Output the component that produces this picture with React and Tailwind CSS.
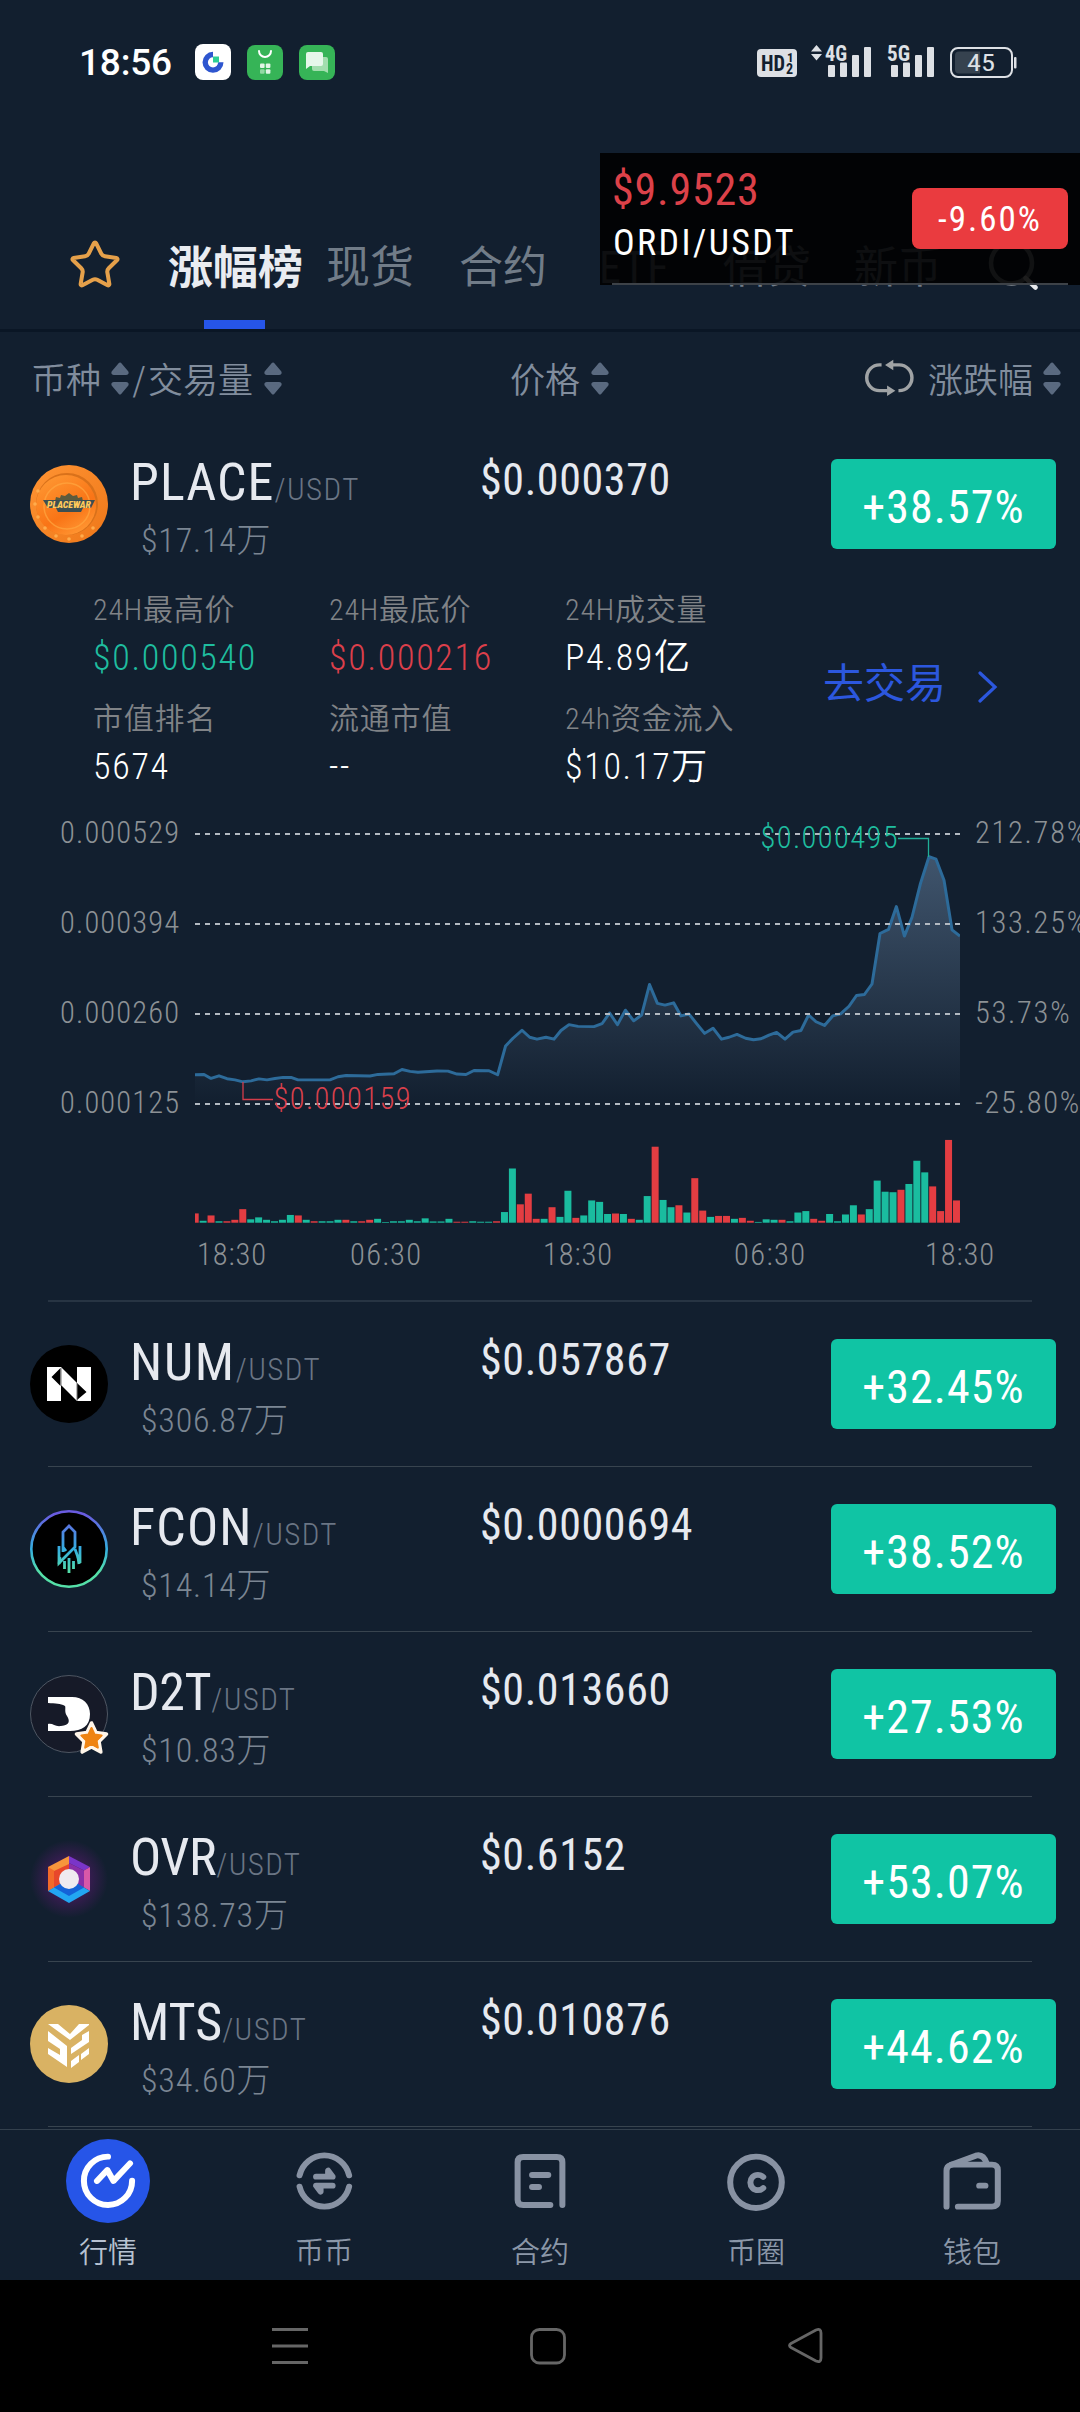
import { Star } from "lucide-react";

const TABS = [
  { label: "涨幅榜", className: "w-[158px] font-bold text-[45px] text-[#e9ecf1]", active: true },
  { label: "现货", className: "w-[133px] text-[44px] text-[#717c88]" },
  { label: "合约", className: "w-[140px] text-[44px] text-[#717c88]" },
  { label: "ETF", className: "w-[124px] text-[44px] tracking-[1.5px] text-[#717c88]" },
  { label: "借贷", className: "w-[131px] text-[44px] text-[#717c88]" },
  { label: "新币", className: "w-[100px] text-[44px] text-[#717c88]" },
];

const STATS = [
  { label: "24H最高价", value: "$0.000540", color: "text-[#1fbd9f]" },
  { label: "24H最底价", value: "$0.000216", color: "text-[#dc3f4b]" },
  { label: "24H成交量", value: "P4.89亿", color: "text-white" },
  { label: "市值排名", value: "5674", color: "text-white" },
  { label: "流通市值", value: "--", color: "text-white" },
  { label: "24h资金流入", value: "$10.17万", color: "text-white" },
];

const PRICE_LINE =
  "195,1083.8 204,1083.4 211,1087.5 219,1084.8 227,1087.8 235,1089 243,1091 251,1090 259,1088 267,1089 275,1087.6 283,1086.5 291,1086.5 298,1089 330,1089 338,1085.8 346,1084.5 370,1085 378,1083.4 394,1082.7 402,1078.3 410,1080.3 418,1081.2 437,1079.8 448,1080 457,1083 466,1083.4 474,1079.3 489,1079.6 497.6,1083.8 505.6,1054 513,1046 522,1037.8 529.7,1045 537,1047 546,1045 554,1047 561,1038 569,1032 578,1033.8 594,1034 602,1031 609.6,1020 617.5,1032 625.4,1017 633.7,1028 641.6,1022 649.5,990.5 657.4,1010 665,1011.8 673.6,1009.4 681,1023 689,1021 697,1031.4 704.6,1041 713,1035.6 721.5,1047 729,1045 737,1042 745.6,1046 753.5,1047.6 761,1046.6 769,1042.8 776.6,1040 785,1047 793,1039.7 801,1038 808.6,1022 816,1029 824.5,1032.8 832.7,1023 840.6,1020.8 849,1013 856.5,1001.8 864.4,1000.8 872,990 880,937.8 888.5,933.6 896.4,910 904.4,940.5 912,921 920.5,886 929,858.5 936,861 944,882.7 952,934 960,940.5";

// positive = up candle (green), negative = down candle (red)
const VOLUMES = [
  -9.6, 2, -7.5, 1.5, -1.5, -3, -14, 3.5, 5.5, 3, 1.5, 3, 8, -7.5, 3, -1.5, 1.5, 1.5, 3, -3, 1.5, -1.5, -3, 4, 0.7,
  1.5, 1.5, 3, 1.5, 4.5, 1.3, 1.3, 4, -1, -1, 1.5, 1, 1, -1.5, 11, 56, -19, -30, -4, 4, -16, 6, 33, -5, 7.5, 23,
  21.5, 9, -9.5, 9, -4, 3, 27.5, -78.5, 23.5, 16, -18, 10.5, -46, -12.5, 6, -7, -7, 4, -5, -2, 0.8, 3.5, 3, -3, 1.5,
  10.5, 12, -4, -2, 9, 1.5, 8.5, 18, -8.5, 14, 43.5, 32, 31.5, -34, 40, 64, 52, -37.5, -12, -85.5, -23,
];
const VOLUME_SCALE = 0.968;

const GRID = [
  { y: 834, left: "0.000529", right: "212.78%" },
  { y: 924, left: "0.000394", right: "133.25%" },
  { y: 1014, left: "0.000260", right: "53.73%" },
  { y: 1104, left: "0.000125", right: "-25.80%" },
];

const TIMES = [
  { x: 197, w: 69, label: "18:30" },
  { x: 350, w: 71, label: "06:30" },
  { x: 543, w: 69, label: "18:30" },
  { x: 734, w: 71, label: "06:30" },
  { x: 925, w: 69, label: "18:30" },
];

function StatusBar() {
  return (
    <div className="flex h-[158px] shrink-0 items-start pt-[44px] pl-[79px] pr-[62px]">
      <span className="w-[116px] font-['Roboto',sans-serif] text-[37px] font-medium leading-[38px] tracking-[-0.2px] text-white">18:56</span>
      <div className="flex gap-4">
        <svg width="36" height="36" viewBox="0 0 36 36">
          <rect width="36" height="36" rx="8" fill="#fff" />
          <path d="M18 10.500a7.800 7.800 0 1 0 7.800 7.800" fill="none" stroke="#2e56cf" strokeWidth="5.400" />
          <path d="M18 12.500h6v6h-6z" fill="#2ecf96" />
        </svg>
        <svg width="36" height="36" viewBox="0 0 36 36">
          <rect y="1" width="36" height="35" rx="8" fill="#36b457" />
          <path d="M12 7a6 6 0 0 0 12 0" fill="none" stroke="#fff" strokeWidth="2" strokeLinecap="round" />
          <rect x="13" y="19.500" width="4.600" height="4.600" rx="1" fill="#e2f5e6" />
          <rect x="18.800" y="19.500" width="4.600" height="4.600" rx="1" fill="#e2f5e6" />
          <rect x="13" y="25.200" width="4.600" height="4.600" rx="1" fill="#93d9a4" />
          <rect x="18.800" y="25.200" width="4.600" height="4.600" rx="1" fill="#e2f5e6" />
        </svg>
        <svg width="36" height="36" viewBox="0 0 36 36">
          <rect y="1" width="36" height="35" rx="8" fill="#36b457" />
          <path d="M15 13h12q2 0 2 2v14l-4-2H15q-2 0-2-2V15q0-2 2-2z" fill="#a2deae" />
          <path d="M9 8h13q2 0 2 2v10q0 2-2 2H11l-4 3V10q0-2 2-2z" fill="#e6f7ea" />
        </svg>
      </div>
      <svg className="-mt-2 ml-auto" width="262" height="46" viewBox="756 36 262 46" fontFamily="Roboto Condensed" fill="#dde0e5">
        <rect x="757" y="49" width="40" height="28" rx="4" />
        <g fill="#121f2f" fontWeight="700">
          <text x="761" y="71" fontSize="22" textLength="24" lengthAdjust="spacingAndGlyphs">HD</text>
          <text x="787" y="62" fontSize="13">1</text>
          <text x="786" y="74" fontSize="14">2</text>
        </g>
        <path d="M816.500 45l5.500 6.500h-11zM816.500 60.500l5.500-6.500h-11z" />
        <text x="825" y="60.500" fontSize="21.500" fontWeight="700" textLength="22" lengthAdjust="spacingAndGlyphs">4G</text>
        <text x="887" y="60.500" fontSize="21.500" fontWeight="700" textLength="23" lengthAdjust="spacingAndGlyphs">5G</text>
        {[828, 891].map((x) => (
          <g key={x}>
            <rect x={x} y="65" width="7" height="12" rx="1" />
            <rect x={x + 12} y="62.500" width="7" height="14.500" rx="1" />
            <rect x={x + 24} y="55" width="7" height="22" rx="1" />
            <rect x={x + 36} y="47" width="7" height="30" rx="1" />
          </g>
        ))}
        <rect x="951" y="48" width="61" height="29" rx="7" fill="none" stroke="#dde0e5" strokeWidth="2" />
        <path d="M959 51.500h21v22h-21q-4 0-4-4V55.500q0-4 4-4z" fill="#36424f" />
        <rect x="1014" y="57" width="2.500" height="11.500" rx="1" />
        <text x="967" y="71" fontSize="24" textLength="28" lengthAdjust="spacingAndGlyphs">45</text>
      </svg>
    </div>
  );
}

function FloatingTicker() {
  return (
    <div className="absolute top-[153px] right-0 flex h-[132px] w-[480px] bg-black/88 px-3">
      <div className="flex w-full items-center justify-between border-b-2 border-[#3d4248]">
        <div className="flex flex-col self-start pt-[14px]">
          <span className="text-[44px] leading-[46px] tracking-[0.8px] text-[#dc4149]">$9.9523</span>
          <span className="mt-[10px] pl-px text-[36px] leading-[40px] tracking-[2.4px] text-white">ORDI/USDT</span>
        </div>
        <span className="flex h-[61px] w-[156px] items-center justify-center rounded-lg bg-[#ea3b3f] pt-[5px] text-[35px] tracking-[2px] text-white">-9.60%</span>
      </div>
    </div>
  );
}

function Tabs() {
  return (
    <div className="flex h-[174px] shrink-0 items-center border-b-[3px] border-[#0a1625] pl-[68px]">
      <Star className="mt-[42px] mr-[46px] size-[54px] text-[#e5a04a]" strokeWidth={1.8} />
      {TABS.map((tab) => (
        <div key={tab.label} className={`mt-[46px] flex h-[125px] flex-col leading-[129px] ${tab.className}`}>
          <span className="h-[116px] whitespace-nowrap">{tab.label}</span>
          {tab.active && <span className="ml-[36px] h-[9px] w-[61px] shrink-0 bg-[#2655e8]" />}
        </div>
      ))}
      <svg className="mt-[43px] ml-[32px] shrink-0" width="52" height="52" viewBox="985 239 52 52" fill="none" stroke="#8d9399" strokeWidth="4.500">
        <circle cx="1010.500" cy="263" r="20.500" />
        <path d="M1024.500 278l10 9.500" stroke="#e8eaec" strokeLinecap="round" />
      </svg>
    </div>
  );
}

function SortArrows() {
  return (
    <svg className="mb-[8px] shrink-0" width="18" height="33" viewBox="0 0 18 34" preserveAspectRatio="none" fill="#5a6a80" stroke="#5a6a80" strokeWidth="3" strokeLinejoin="round">
      <path d="M9 2l7 8.500q.5 1.500-1 1.500H3q-1.500 0-1-1.500z" />
      <path d="M9 32l7-8.500q.5-1.500-1-1.500H3q-1.500 0-1 1.500z" />
    </svg>
  );
}

function ListHeader() {
  return (
    <div className="flex h-[90px] shrink-0 items-center pt-[10px] pl-[31px] text-[35px] font-[350] text-[#818d9d]">
      <div className="flex w-[479px] items-center">
        <span className="w-[80px]">币种</span>
        <SortArrows />
        <span className="ml-[3px] w-[16px] text-[40px] font-light">/</span>
        <span className="w-[116px]">交易量</span>
        <SortArrows />
      </div>
      <div className="flex w-[355px] items-center">
        <span className="w-[81px]">价格</span>
        <SortArrows />
      </div>
      <svg className="mb-[10px]" width="49" height="37" viewBox="942 1072 142 112" preserveAspectRatio="none" fill="none" stroke="#a0a3a5" strokeWidth="10">
        <path d="M990 1090h-6a37 39 0 0 0 0 78h24" />
        <path d="M1018 1090h23a37 39 0 0 1 0 78h-2" />
        <path d="M1000 1090l24-16v32zM1030 1168l-24-16v32z" fill="#a0a3a5" stroke="none" />
      </svg>
      <span className="ml-[14px] w-[115px] shrink-0">涨跌幅</span>
      <SortArrows />
    </div>
  );
}

function PlaceLogo() {
  return (
    <svg width="78" height="78" viewBox="0 0 78 78" className="shrink-0">
      <defs>
        <linearGradient id="placeRim" x1="0" y1="0" x2="1" y2="1">
          <stop offset="0" stopColor="#ff9433" />
          <stop offset="1" stopColor="#ee7719" />
        </linearGradient>
        <linearGradient id="placeFace" x1="0" y1="0" x2="0.6" y2="1">
          <stop offset="0" stopColor="#ff9c36" />
          <stop offset="0.7" stopColor="#f97416" />
          <stop offset="1" stopColor="#ff922f" />
        </linearGradient>
      </defs>
      <circle cx="39" cy="39" r="39" fill="url(#placeRim)" />
      <circle cx="37" cy="39" r="31" fill="#d9711a" />
      <circle cx="36" cy="40" r="30" fill="url(#placeFace)" />
      <circle cx="37" cy="41" r="23" fill="none" stroke="#ffa640" strokeWidth="1.500" opacity="0.700" />
      <g fill="#ffac4c">
        <circle cx="5" cy="39" r="1.800" />
        <circle cx="8" cy="26" r="1.800" />
        <circle cx="8" cy="52" r="1.800" />
        <circle cx="15" cy="63" r="1.800" />
        <circle cx="26" cy="71" r="1.800" />
        <circle cx="39" cy="74" r="1.800" />
        <circle cx="52" cy="71" r="1.800" />
        <circle cx="63" cy="63" r="1.800" />
      </g>
      <path d="M25 36l1-4 4 1 1-3 4 1 4-3 4 3 4-1 1 3 4-1 1 4z" fill="#5d5b3c" />
      <path d="M13 35h52l-4 8h-8l-2 4H28l-2-4h-8z" fill="#3c4f52" />
      <text x="17" y="42.500" fontSize="9" fontWeight="900" fontStyle="italic" fill="#ffc95a" textLength="44" lengthAdjust="spacingAndGlyphs">PLACEWAR</text>
    </svg>
  );
}

function NumLogo() {
  return (
    <svg width="78" height="78" viewBox="0 0 78 78" className="shrink-0">
      <circle cx="39" cy="39" r="39" fill="#000" />
      <path d="M17 22h14l16 16V22h14v34H47L31 40v16H17z" fill="#fff" />
      <path d="M21.500 32l9-9v18zM47 38l9.500 9-9.500 8z" fill="#000" />
      <path d="M31 23v17M47 38v18" stroke="#777" strokeWidth="1" />
    </svg>
  );
}

function FconLogo() {
  return (
    <svg width="78" height="78" viewBox="0 0 78 78" className="shrink-0">
      <defs>
        <linearGradient id="fcon" x1="0" y1="0" x2="0" y2="78" gradientUnits="userSpaceOnUse">
          <stop offset="0.05" stopColor="#6a5be0" />
          <stop offset="0.5" stopColor="#35aee0" />
          <stop offset="0.8" stopColor="#55e0a8" />
        </linearGradient>
      </defs>
      <circle cx="39" cy="39" r="37.700" fill="#000" stroke="url(#fcon)" strokeWidth="2.600" />
      <g fill="none" stroke="url(#fcon)" strokeWidth="2.800">
        <path d="M36 41l-3-4V22l6-6 6 6v15L29 53V36M33 37v5M45 39l5 14V36" />
        <path d="M39 48v15M34.500 51v8M43.500 51v8M30 47l-1 7M48 47l1 7" />
      </g>
    </svg>
  );
}

function D2tLogo() {
  return (
    <svg width="82" height="80" viewBox="0 0 82 80" className="-mr-1 shrink-0">
      <circle cx="39" cy="39" r="38.500" fill="#161a28" stroke="#5d6470" strokeWidth="0.800" />
      <path d="M18 22h24c11 0 18 7 18 17 0 12-8 17-20 17H18v-7c5-1 7 3 13 2 9-1 9-5 6-10-3-4-1-8-2-10-5-3-9-2-17-3z" fill="#fff" />
      <path
        d="M61.500 48l4.500 9.500 10.500 1.500-7.500 7.500 1.800 10.500-9.300-5-9.300 5L54 66.500 46.500 59 57 57.500z"
        fill="#ef8412"
        stroke="#fff6ea"
        strokeWidth="3.600"
        strokeLinejoin="round"
      />
      <path d="M61.500 53l3 6.500 7 1-5 5 1.300 7-6.300-3.500-6.300 3.500 1.300-7-5-5 7-1z" fill="#ef8412" stroke="#ef8412" strokeWidth="2" strokeLinejoin="round" />
    </svg>
  );
}

function OvrLogo() {
  return (
    <svg width="78" height="78" viewBox="0 0 78 78" className="shrink-0">
      <defs>
        <radialGradient id="ovrGlow">
          <stop offset="0.4" stopColor="#3f1c58" />
          <stop offset="1" stopColor="#3f1c58" stopOpacity="0" />
        </radialGradient>
      </defs>
      <circle cx="39" cy="39" r="39" fill="url(#ovrGlow)" />
      <path d="M39 16v23L18 51V27z" fill="#f7963c" />
      <path d="M18 27l6 3.500v17L18 51z" fill="#f26a2a" />
      <path d="M39 24v15l-15 8.500V31z" fill="#e8472b" />
      <path d="M39 16l21 11-6 3.500L39 23z" fill="#7a35c9" />
      <path d="M60 27v24l-6-3.500v-17z" fill="#d858a8" />
      <path d="M39 23l15 7.500v17L39 39z" fill="#8a2fa8" />
      <path d="M18 51l21-12 21 12-21 12z" fill="#22a7f2" />
      <path d="M24 47.500L39 39l15 8.500L39 56z" fill="#1463d8" />
      <circle cx="39" cy="39" r="10" fill="#efeaf0" />
    </svg>
  );
}

function MtsLogo() {
  return (
    <svg width="78" height="78" viewBox="0 0 78 78" className="shrink-0">
      <circle cx="39" cy="39" r="39" fill="#d9b263" />
      <g fill="#fff">
        <path d="M18 19h10l12 10 9-10h10v1L40 35z" />
        <path d="M18 26l19 15v21L18 49v-6l12 7v-6l-12-8z" />
        <path d="M59 26v11L41 49v-6l11-8v-5z" />
        <path d="M59 43v6l-8 6v-6zM49 50v7l-8 6v-7z" />
      </g>
    </svg>
  );
}

const COINS = [
  { name: "NUM", tracking: "tracking-[1.7px]", volume: "$306.87万", price: "$0.057867", change: "+32.45%", Logo: NumLogo },
  { name: "FCON", tracking: "tracking-[1.2px]", volume: "$14.14万", price: "$0.0000694", change: "+38.52%", Logo: FconLogo },
  { name: "D2T", tracking: "tracking-[-0.4px]", volume: "$10.83万", price: "$0.013660", change: "+27.53%", Logo: D2tLogo },
  { name: "OVR", tracking: "tracking-[-0.4px]", volume: "$138.73万", price: "$0.6152", change: "+53.07%", Logo: OvrLogo },
  { name: "MTS", tracking: "tracking-normal", volume: "$34.60万", price: "$0.010876", change: "+44.62%", Logo: MtsLogo },
];

function CoinRow({ name, tracking, volume, price, change, Logo }) {
  return (
    <div className="flex h-[164px] shrink-0 items-start pl-[30px]">
      <div className="flex w-[100px] pt-[43px]">
        <Logo />
      </div>
      <div className="flex w-[350px] flex-col pt-[30px]">
        <div className="flex h-[61px] items-baseline">
          <span className={`text-[52px] font-[450] leading-[61px] text-[#e6e9ef] ${tracking}`}>{name}</span>
          <span className="text-[31px] font-light leading-[30px] tracking-[1.4px] text-[#6a7584]">/USDT</span>
        </div>
        <span className="mt-[7px] pl-[11px] text-[34px] font-light leading-[40px] tracking-[0.8px] text-[#7b8693]">{volume}</span>
      </div>
      <span className="w-[351px] pt-[33px] text-[44px] font-[450] leading-[50px] tracking-[0.6px] text-[#e6e9ef]">{price}</span>
      <span className="mt-[37px] flex h-[90px] w-[225px] items-center justify-center rounded-md bg-[#10c4a4] pt-[6px] text-[46px] font-[450] tracking-[1.1px] text-white">{change}</span>
    </div>
  );
}

function PriceChart() {
  return (
    <svg className="block shrink-0" width="1080" height="498" viewBox="0 802 1080 498" fontSize="30.500" fontWeight="300" fill="#8c9195">
      <defs>
        <linearGradient id="area" x1="0" y1="858" x2="0" y2="1114" gradientUnits="userSpaceOnUse">
          <stop offset="0" stopColor="#7f9fc2" stopOpacity="0.420" />
          <stop offset="1" stopColor="#7f9fc2" stopOpacity="0" />
        </linearGradient>
        <clipPath id="plot">
          <path d="M195 802h765v498H195z" />
        </clipPath>
      </defs>
      <g transform="translate(0 25.700) scale(1 0.968)" clipPath="url(#plot)">
        <polygon points={`195,1114 ${PRICE_LINE} 960,1114`} fill="url(#area)" />
        <polyline points={PRICE_LINE} fill="none" stroke="#2d6b9a" strokeWidth="3" strokeLinejoin="round" />
      </g>
      {GRID.map((row) => (
        <g key={row.y}>
          <path d={`M195 ${row.y}h765`} stroke="#b3bac2" strokeWidth="2" strokeDasharray="5 5" />
          <text x="60" y={row.y + 9} textLength="119">{row.left}</text>
          <text x="975" y={row.y + 9} letterSpacing="1.700">{row.right}</text>
        </g>
      ))}
      <g clipPath="url(#plot)">
        {VOLUMES.map((v, i) => {
          const h = Math.abs(v) * VOLUME_SCALE;
          return <rect key={i} x={191.7 + i * 7.93} y={1222.7 - h} width="7" height={h} fill={v > 0 ? "#1abc9f" : "#e33d42"} />;
        })}
      </g>
      <path d="M243 1082v17.500h30" fill="none" stroke="#d43c4a" strokeWidth="1.300" />
      <text x="273.500" y="1109" fill="#d9404c" textLength="137">$0.000159</text>
      <path d="M898 838.500h30.500V857" fill="none" stroke="#1fae98" strokeWidth="1.300" />
      <text x="760.500" y="847.500" fill="#1fbd9f" textLength="137">$0.000495</text>
      {TIMES.map((t) => (
        <text key={t.x} x={t.x} y="1264.700" textLength={t.w}>{t.label}</text>
      ))}
    </svg>
  );
}

function ExpandedCoin() {
  return (
    <div className="flex shrink-0 flex-col">
      <CoinRow name="PLACE" tracking="tracking-[1.1px]" volume="$17.14万" price="$0.000370" change="+38.57%" Logo={PlaceLogo} />
      <div className="flex h-[216px] pl-[93px]">
        <div className="grid w-[730px] grid-cols-[236px_236px_auto] content-start gap-y-[13px]">
          {STATS.map((s) => (
            <div key={s.label} className="flex flex-col leading-[48px]">
              <span className="text-[30px] font-[350] tracking-[0.8px] text-[#808387]">{s.label}</span>
              <span className={`text-[36px] font-[350] tracking-[1.7px] ${s.color}`}>{s.value}</span>
            </div>
          ))}
        </div>
        <div className="flex h-[194px] items-center gap-8 text-[41px] text-[#2c57de]">
          <span className="mt-[4px]">去交易</span>
          <svg className="mt-[8px]" width="20" height="32" viewBox="0 0 20 32" fill="none" stroke="currentColor" strokeWidth="3.200" strokeLinecap="round">
            <path d="M2 2l15 14L2 30" />
          </svg>
        </div>
      </div>
      <PriceChart />
      <div className="mx-[48px] h-[2px] bg-[#273443]" />
    </div>
  );
}

function NavIcon({ viewBox, children, ...rest }) {
  return (
    <svg width="84" height="84" viewBox={viewBox} preserveAspectRatio="none" fill="none" stroke="#8892a3" strokeWidth="17.500" strokeLinecap="round" strokeLinejoin="round" {...rest}>
      {children}
    </svg>
  );
}

const NAV = [
  {
    label: "行情",
    color: "text-[#b7c2d2]",
    icon: (
      <NavIcon viewBox="192 87 244 252" stroke="#fff">
        <ellipse cx="314" cy="213" rx="122" ry="126" fill="#2655e8" stroke="none" />
        <path d="M314 140a70 72.500 0 1 0 70 72" />
        <path d="M282 213l30-33 18 33 48-53" />
      </NavIcon>
    ),
  },
  {
    label: "币币",
    icon: (
      <NavIcon viewBox="818 87 244 252">
        <path d="M869 196a74 78 0 0 1 144 0M869 230a74 78 0 0 0 144 0" />
        <path d="M917 200h48l-13-18v18M965 227h-48l13 18v-18" />
      </NavIcon>
    ),
  },
  {
    label: "合约",
    icon: (
      <NavIcon viewBox="1446 87 244 252">
        <path d="M1633 285V157q0-16-16-16h-98q-16 0-16 16v112q0 16 16 16h79" />
        <path d="M1545 195h47M1545 231h20" />
      </NavIcon>
    ),
  },
  {
    label: "币圈",
    icon: (
      <NavIcon viewBox="2073 87 244 252">
        <ellipse cx="2195" cy="217" rx="75" ry="77" />
        <path d="M2216 201a22 23 0 1 0 0 33" />
      </NavIcon>
    ),
  },
  {
    label: "钱包",
    icon: (
      <NavIcon viewBox="1133 87 244 252">
        <path d="M1181 290V182q0-13 12-17l73-28q22-6 32 24" />
        <path d="M1195 164h118q17 0 17 17v92q0 17-17 17h-99" />
        <path d="M1276 227h18" />
      </NavIcon>
    ),
  },
];

function BottomNav() {
  return (
    <div className="grid h-[151px] shrink-0 grid-cols-5 border-t border-[#33404d] pt-[9px] text-center">
      {NAV.map((item) => (
        <div key={item.label} className={`flex flex-col items-center ${item.color || "text-[#8b97a8]"}`}>
          {item.icon}
          <span className="mt-[10px] text-[29px] font-[350] leading-[40px]">{item.label}</span>
        </div>
      ))}
    </div>
  );
}

function SystemBar() {
  return (
    <div className="flex flex-1 items-center bg-black pl-[272px]">
      <svg width="551" height="40" viewBox="272 2326 551 40" fill="none" stroke="#666" strokeWidth="2.800" strokeLinejoin="round">
        <path d="M272 2329.500h36M272 2346h36M272 2362.500h36" />
        <rect x="531.500" y="2329.500" width="33" height="33.500" rx="8" />
        <path d="M791 2343.500l25-13.500q5-2 5 3v25q0 5-5 3l-25-13.500q-3-2 0-4z" />
      </svg>
    </div>
  );
}

export default function App() {
  return (
    <div className="relative flex h-[2412px] w-[1080px] flex-col overflow-hidden bg-[#121f2f] font-['Roboto_Condensed','Noto_Sans_CJK_SC',sans-serif]">
      <StatusBar />
      <Tabs />
      <ListHeader />
      <div className="flex h-[1707px] shrink-0 flex-col overflow-hidden">
        <ExpandedCoin />
        {COINS.map((coin) => (
          <div key={coin.name} className="shrink-0">
            <CoinRow {...coin} />
            <div className="mx-[48px] h-px bg-[#38444f]" />
          </div>
        ))}
      </div>
      <BottomNav />
      <SystemBar />
      <FloatingTicker />
    </div>
  );
}
